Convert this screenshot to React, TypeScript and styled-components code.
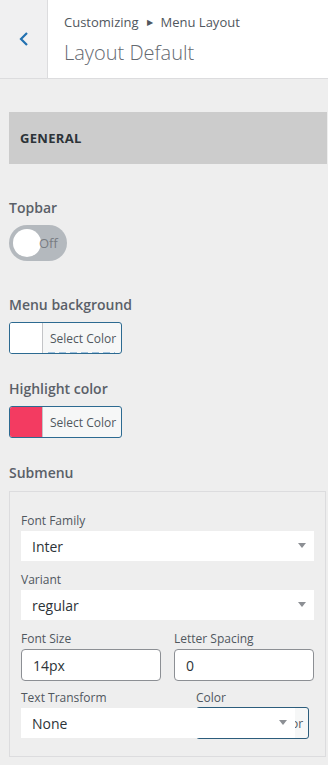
import React from "react";
import styled, { createGlobalStyle } from "styled-components";

const GlobalStyle = createGlobalStyle`
  * { box-sizing: border-box; }
  body {
    margin: 0;
    background: #eeeeee;
    font-family: "Open Sans", "Noto Sans", sans-serif;
    color: #50575e;
  }
`;

const Page = styled.div`
  width: 328px;
  min-height: 765px;
  background: #eeeeee;
`;

const Header = styled.div`
  display: flex;
  height: 79px;
  border-bottom: 1px solid #dcdcde;
  background: #fff;
`;

const BackButton = styled.div`
  width: 48px;
  display: flex;
  align-items: center;
  justify-content: center;
  background: #f0f0f1;
  border-right: 1px solid #dcdcde;
  color: #2271b1;
`;

const HeaderText = styled.div`
  padding: 12px 16px;
  display: flex;
  flex-direction: column;
`;

const Crumb = styled.div`
  font-size: 13px;
  line-height: 20px;
  color: #50575e;
`;

const Arrow = styled.span`
  font-size: 8px;
  margin: 0 8px;
  vertical-align: 2px;
`;

const Title = styled.div`
  font-size: 20px;
  font-weight: 300;
  line-height: 28px;
  margin-top: 7px;
  color: #646970;
`;

const Body = styled.div`
  padding: 33px 1px 0 9px;
`;

const SectionBar = styled.div`
  height: 52px;
  background: #cccccc;
  display: flex;
  align-items: center;
  padding-left: 11px;
  font-size: 13px;
  font-weight: 700;
  color: #2c3338;
  letter-spacing: 0.3px;
`;

const Field = styled.div<{ top: number }>`
  margin-top: ${({ top }) => top}px;
`;

const Label = styled.div`
  font-size: 14px;
  font-weight: 600;
  line-height: 20px;
  margin-bottom: 7px;
  color: #5a6068;
`;

const Toggle = styled.div`
  width: 58px;
  height: 36px;
  border-radius: 18px;
  background: #b4b9be;
  display: flex;
  align-items: center;
  padding-left: 4px;
`;

const Knob = styled.div`
  width: 28px;
  height: 28px;
  border-radius: 50%;
  background: #fff;
`;

const ToggleText = styled.span`
  font-size: 13px;
  color: #787c82;
  margin-left: -2px;
`;

const ColorButton = styled.div`
  position: relative;
  display: flex;
  width: 113px;
  height: 32px;
  border: 1px solid #2c6a91;
  border-radius: 3px;
  overflow: hidden;
  background: #f6f7f7;
`;

const Swatch = styled.div<{ color: string }>`
  width: 33px;
  background: ${({ color }) => color};
  border-right: 1px solid #c3c4c7;
`;

const ColorLabel = styled.div`
  flex: 1;
  display: flex;
  align-items: center;
  padding-left: 7px;
  font-size: 12px;
  color: #50575e;
`;

const Dashes = styled.div`
  position: absolute;
  left: 38px;
  right: 6px;
  bottom: 0;
  height: 1px;
  background: repeating-linear-gradient(
    to right,
    #9fc0dc 0 7px,
    transparent 7px 11px
  );
`;

const SubBox = styled.div`
  margin-top: 8px;
  border: 1px solid #dcdcde;
  padding: 21px 11px 16px 11px;
  margin-right: 1px;
`;

const SmallLabel = styled.div`
  font-size: 12px;
  line-height: 16px;
  margin-bottom: 2px;
  color: #50575e;
`;

const Select = styled.div`
  position: relative;
  height: 30px;
  background: #fff;
  display: flex;
  align-items: center;
  padding-left: 11px;
  font-size: 14px;
  color: #2c3338;
  margin-bottom: 11px;
`;

const Caret = styled.span`
  position: absolute;
  right: 8px;
  top: 12px;
  width: 0;
  height: 0;
  border-left: 4px solid transparent;
  border-right: 4px solid transparent;
  border-top: 5px solid #8c8f94;
`;

const Row = styled.div`
  display: grid;
  grid-template-columns: 1fr 1fr;
  column-gap: 13px;
`;

const Input = styled.div`
  height: 32px;
  border: 1px solid #8c8f94;
  border-radius: 4px;
  background: #fff;
  display: flex;
  align-items: center;
  padding-left: 11px;
  font-size: 14px;
  color: #2c3338;
  margin-bottom: 9px;
`;

const Overlap = styled.div`
  position: relative;
  height: 32px;
`;

const OverLabels = styled.div`
  display: flex;
  font-size: 12px;
  line-height: 16px;
  margin-bottom: 2px;
`;

const LabelCell = styled.span<{ w?: number }>`
  width: ${({ w }) => (w ? `${w}px` : "auto")};
`;

const HiddenColor = styled(ColorButton)`
  position: absolute;
  left: 175px;
  top: -1px;
  border-color: #2c5d7c;
`;

const TopSelect = styled(Select)`
  position: absolute;
  left: 0;
  top: 0;
  width: 274px;
  margin: 0;
`;

const Chevron = () => (
  <svg width="12" height="16" viewBox="0 0 12 16">
    <path d="M9 2 L3 8 L9 14" fill="none" stroke="currentColor" strokeWidth="2.2" />
  </svg>
);

export default function App() {
  return (
    <Page>
      <GlobalStyle />
      <Header>
        <BackButton>
          <Chevron />
        </BackButton>
        <HeaderText>
          <Crumb>
            Customizing<Arrow>▶</Arrow>Menu Layout
          </Crumb>
          <Title>Layout Default</Title>
        </HeaderText>
      </Header>
      <Body>
        <SectionBar>GENERAL</SectionBar>
        <Field top={34}>
          <Label>Topbar</Label>
          <Toggle>
            <Knob />
            <ToggleText>Off</ToggleText>
          </Toggle>
        </Field>
        <Field top={34}>
          <Label>Menu background</Label>
          <ColorButton>
            <Swatch color="#ffffff" />
            <ColorLabel>Select Color</ColorLabel>
            <Dashes />
          </ColorButton>
        </Field>
        <Field top={25}>
          <Label>Highlight color</Label>
          <ColorButton>
            <Swatch color="#f33b61" />
            <ColorLabel>Select Color</ColorLabel>
          </ColorButton>
        </Field>
        <Field top={25}>
          <Label>Submenu</Label>
          <SubBox>
            <SmallLabel>Font Family</SmallLabel>
            <Select>
              Inter
              <Caret />
            </Select>
            <SmallLabel>Variant</SmallLabel>
            <Select>
              regular
              <Caret />
            </Select>
            <Row>
              <div>
                <SmallLabel>Font Size</SmallLabel>
                <Input>14px</Input>
              </div>
              <div>
                <SmallLabel>Letter Spacing</SmallLabel>
                <Input>0</Input>
              </div>
            </Row>
            <OverLabels>
              <LabelCell w={175}>Text Transform</LabelCell>
              <LabelCell>Color</LabelCell>
            </OverLabels>
            <Overlap>
              <HiddenColor>
                <Swatch color="#2c3338" />
                <ColorLabel>Select Color</ColorLabel>
              </HiddenColor>
              <TopSelect>
                None
                <Caret />
              </TopSelect>
            </Overlap>
          </SubBox>
        </Field>
      </Body>
    </Page>
  );
}
